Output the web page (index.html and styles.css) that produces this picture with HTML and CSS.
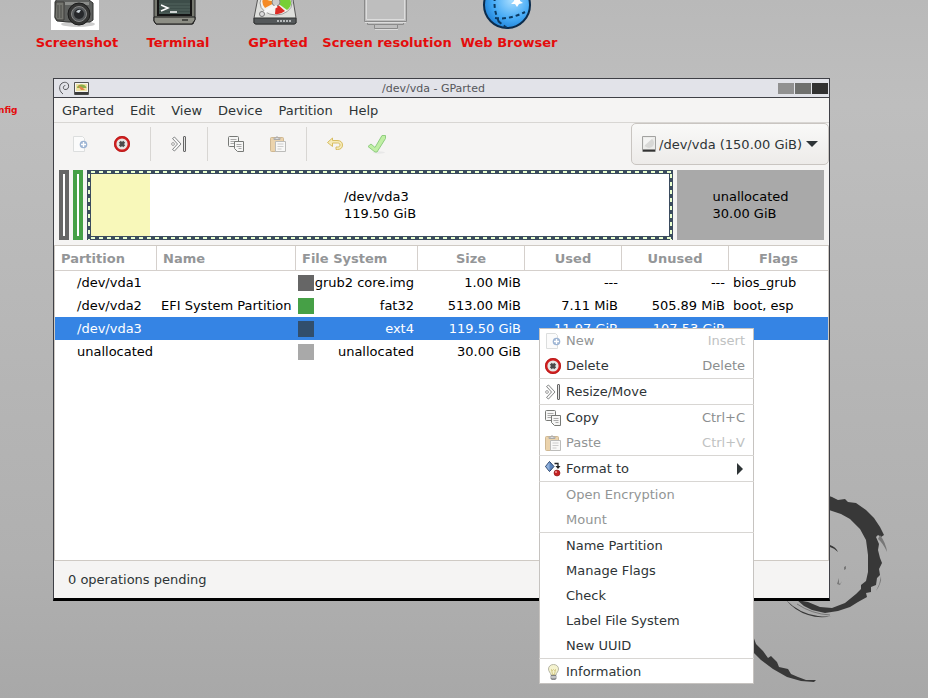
FILE: index.html
```html
<!DOCTYPE html>
<html lang="en">
<head>
<meta charset="utf-8">
<title>/dev/vda - GParted</title>
<link rel="stylesheet" href="styles.css">
</head>
<body>
<svg class="defs" width="0" height="0" aria-hidden="true">
  <symbol id="i-new" viewBox="0 0 16 16">
    <path d="M1.500 .5h9l2 2v13h-11z" fill="#fbfbfb" stroke="#dcdede"/>
    <circle cx="11.500" cy="8.500" r="3.800" fill="#9db4d3"/>
    <path d="M11.500 6v5M9 8.500h5" stroke="#fff" stroke-width="1.400"/>
  </symbol>
  <symbol id="i-delete" viewBox="0 0 16 16">
    <circle cx="8" cy="8" r="6.800" fill="#e6e6e4" stroke="#d21f1f" stroke-width="2.400"/>
    <circle cx="8" cy="8" r="7.600" fill="none" stroke="#b01818" stroke-width=".7"/>
    <path d="M5.800 5.800l4.400 4.400M10.200 5.800l-4.400 4.400" stroke="#4a4a4a" stroke-width="2.800"/>
  </symbol>
  <symbol id="i-resize" viewBox="0 0 16 16">
    <path d="M1.500 2.500l2-1.500L10 8l-6.500 7-2-1.500L6.500 8z" fill="#f8f8f8" stroke="#77797a" stroke-width=".9"/>
    <circle cx="2" cy="8" r="1.400" fill="#fff" stroke="#888" stroke-width=".8"/>
    <rect x="12.500" y=".5" width="2" height="15" rx=".5" fill="#e4e4e4" stroke="#666"/>
  </symbol>
  <symbol id="i-copy" viewBox="0 0 16 16">
    <rect x=".5" y=".5" width="10" height="10" rx="1" fill="#f6f6f5" stroke="#777976"/>
    <path d="M2.500 3.500h6M2.500 5.500h6M2.500 7.500h4" stroke="#aaa"/>
    <path d="M6.500 5.500h9v10h-6l-3-3z" fill="#f6f6f5" stroke="#777976"/>
    <path d="M8.500 8.500h5M8.500 10.500h5M10.500 12.500h3" stroke="#aaa"/>
  </symbol>
  <symbol id="i-paste" viewBox="0 0 16 16">
    <rect x=".5" y="1.500" width="13" height="14" rx="1" fill="#ebd3ac" stroke="#cfb893"/>
    <path d="M4 3.500V2h2l1-1.500L8 2h2v1.500z" fill="#ddd" stroke="#aaa"/>
    <path d="M5.500 5.500h10v10h-10z" fill="#f8f8f7" stroke="#bcbcba"/>
    <path d="M7.500 8h6M7.500 10.500h6M7.500 13h4" stroke="#ccc"/>
  </symbol>
  <symbol id="i-undo" viewBox="0 0 16 16">
    <path d="M.5 6.500l5-4.500v2.500h4.500c3.500 0 5.500 1.500 5.500 4.500 0 3-2 4.500-5 4.500H9v-2.500h1.500c1.500 0 2.500-.5 2.500-2s-1-2-2.500-2h-5v3.500z" fill="#f6ebb9" stroke="#d8bd62"/>
  </symbol>
  <symbol id="i-apply" viewBox="0 0 20 20">
    <ellipse cx="12" cy="18.500" rx="6" ry="1.200" fill="#e8e8e8"/>
    <path d="M1 12.500L4 10l4 3.500L15 1.500h3.500v3L10 18H8z" fill="#c0efa4" stroke="#8fcd80" stroke-linejoin="round"/>
  </symbol>
  <symbol id="i-format" viewBox="0 0 16 16">
    <path d="M4.500 .5L9 5.500l-4.500 5L.5 5.500z" fill="#5a84bd" stroke="#263f66"/>
    <path d="M4.500 1v9L1 5.500z" fill="#8fb0dc"/>
    <path d="M9.500 2.500h3.500v4" fill="none" stroke="#222" stroke-width="1.300"/>
    <path d="M10.500 5h5L13 8z" fill="#222"/>
    <circle cx="12" cy="12" r="3" fill="#c62121" stroke="#841414" stroke-width=".6"/>
    <circle cx="11" cy="11" r="1" fill="#f09a9a"/>
  </symbol>
  <symbol id="i-info" viewBox="0 0 16 16">
    <path d="M8.500 .5c-3 0-5 2-5 4.500 0 2.500 2 3.500 2.500 6h5c.5-2.500 2.500-3.500 2.500-6 0-2.500-2-4.500-5-4.500z" fill="#f5f3cf" stroke="#b6b6a5"/>
    <path d="M6.500 5.500l1 1 1-1 1 1 1-1-1 5h-2z" fill="none" stroke="#c9bd74" stroke-width=".8"/>
    <path d="M6 11.500h5v3l-1 1.300H7l-1-1.300z" fill="#9b9da0" stroke="#686a6d" stroke-width=".7"/>
    <path d="M6 13h5" stroke="#eee"/>
  </symbol>
  <symbol id="i-app" viewBox="0 0 15 13">
    <path d="M.5 .5h14v12H.5z" fill="#f4f4ee" stroke="#555"/>
    <path d="M2 2h11v7H2z" fill="#f0e2a4"/>
    <path d="M3 6c0-4 8-5 9.500 0L8 6z" fill="#8aae4a"/>
    <path d="M4 3.500l4 1.500 3 3H7z" fill="#e0854a"/>
    <path d="M1 10h13v2.500H1z" fill="#3a3a3a"/>
  </symbol>
</svg>

<main class="desktop">
  <svg class="swirl" viewBox="740 480 188 218" aria-hidden="true">
    <path d="M826 495L832 497 838 500 845 499 848 502 856 503 866 510 874 518 880 527 884 535 881 537 878 535 876 537 879 544 878 550 880 558 882 563 879 569 880 575 877 578 876 585 871 587 871 592 866 593 867 597 858 602 850 607 838 611 825 613 812 610 804 606 797 600 808 602 820 607 832 608 845 603 856 594 861 589 861 585 866 581 868 572 868 555 866 540 860 529 850 519 841 514 826 509z"/>
    <path d="M880 535Q886 543 887 552 883 543 878 539zM881 576Q882 583 876 591 880 584 881 576z" fill="#777"/>
    <path d="M786 600Q800 614 818 616 826 617 832 616 820 619 808 615 795 611 786 600z"/>
    <path d="M797 604Q812 614 830 615" fill="none" stroke="#777"/>
    <path d="M830 545Q836 547 838 552 834 548 830 547z"/>
    <path d="M844 567l2-1v3l-2 1zM839 578l-2 6 3 1 2-4-2 3-1-1z" fill="#777"/>
    <path d="M752 633L756 644 763 651 768 658 771 656 777 662 779 667 788 669 791 674 798 677 806 680 816 680 814 682 801 681 787 677 773 669 761 660 752 651z"/>
  </svg>

  <a class="launcher" id="l-shot" href="#l-shot">
    <svg viewBox="0 0 48 48" aria-hidden="true">
      <rect width="48" height="48" fill="#fff"/>
      <ellipse cx="27" cy="42" rx="17" ry="3" fill="#ccc"/>
      <path d="M6 17l10-6h16l6 7 4 3v17l-3 2H18l-12-1-2-3V20z" fill="#5e605e" stroke="#2f302f"/>
      <path d="M5 20h8v18H6l-2-3z" fill="#74756f" stroke="#3c3d3a"/>
      <path d="M14 20h24v3H14z" fill="#8b8d8a"/>
      <path d="M7 23v13M10 23v13" stroke="#4b4c48"/>
      <circle cx="28" cy="32" r="11" fill="#343534" stroke="#1b1b1b"/>
      <circle cx="28" cy="32" r="7.500" fill="#55595b" stroke="#888"/>
      <circle cx="28" cy="32" r="5" fill="#26282b"/>
      <path d="M25 30q2-3 5-2l-2 3z" fill="#c9d2d8"/>
    </svg>
    <span>Screenshot</span>
  </a>
  <a class="launcher" id="l-term" href="#l-term">
    <svg viewBox="0 0 48 48" aria-hidden="true">
      <path d="M2 2h41v35l-2 5H4l-2-3z" fill="#777970" stroke="#222"/>
      <path d="M2 35h41v3l-3 4H4l-2-3z" fill="#8d8e85" stroke="#191919"/>
      <path d="M6 4h33v29H6z" fill="#3d4d49" stroke="#151515" stroke-width="2"/>
      <path d="M7 22h31M7 25h31M7 28h31M7 31h31" stroke="#53645f"/>
      <path d="M9 23l7 3-7 3M18 30h7" fill="none" stroke="#fff" stroke-width="1.500"/>
      <path d="M30 38h6" stroke="#494a45" stroke-width="2"/>
    </svg>
    <span>Terminal</span>
  </a>
  <a class="launcher" id="l-part" href="#l-part">
    <svg viewBox="0 0 48 48" aria-hidden="true">
      <path d="M8 5h31l5 31v5l-1 1H3l-1-1v-5z" fill="#dedfdc" stroke="#555"/>
      <path d="M2 36h42v5l-2 1H4l-2-1z" fill="#54585a" stroke="#303233"/>
      <ellipse cx="24" cy="21" rx="16" ry="12" fill="#f2f2ef" stroke="#999"/>
      <path d="M24 20V9q14 1 15 12 0 4-4 7z" fill="#76cf36"/>
      <path d="M24 21l9 8q-5 4-10 3z" fill="#dd2c25"/>
      <path d="M24 20l-11 6q-4-5-2-9z" fill="#f58a25"/>
      <path d="M24 20l-12-3q3-6 12-8z" fill="#f3e9a4"/>
      <circle cx="24" cy="20" r="4" fill="#ccc" stroke="#888"/>
      <path d="M10 32l6-4 9-4" stroke="#f8f8f8" stroke-width="3"/>
      <circle cx="10" cy="32" r="2.500" fill="#ddd" stroke="#777"/>
      <path d="M25 39h15" stroke="#b5b9ba" stroke-width="2" stroke-dasharray="2 1"/>
    </svg>
    <span>GParted</span>
  </a>
  <a class="launcher" id="l-res" href="#l-res">
    <svg viewBox="0 0 48 48" aria-hidden="true">
      <g fill="#bebebe" stroke="#8a8a8a">
        <path d="M3.500 2.500h42v37h-42z"/>
        <path d="M5.500 4.500h38v33h-38z" stroke="#dcdcdc"/>
        <path d="M6.500 39.500h36v3h-36z"/>
        <path d="M13.500 42.500h23v4h-23z"/>
      </g>
      <path d="M4 40.500h41M14 47.500h23" stroke="#dcdcdc"/>
    </svg>
    <span>Screen resolution</span>
  </a>
  <a class="launcher" id="l-web" href="#l-web">
    <svg viewBox="0 0 48 48" aria-hidden="true">
      <defs>
        <radialGradient id="globe" cx=".6" cy=".4" r=".7"><stop offset="0" stop-color="#a5dcff"/><stop offset=".6" stop-color="#43a9f5"/><stop offset="1" stop-color="#1778cf"/></radialGradient>
      </defs>
      <circle cx="24" cy="23" r="23" fill="url(#globe)" stroke="#0c2c4c" stroke-width="2"/>
      <path d="M12 15q-2 12 4 25M12 36q14 2 30-6M15 39q5 4 9 7" fill="none" stroke="#0b3a62" stroke-width="2" stroke-dasharray="4 3"/>
      <path d="M32 14l2 3 3-2v4l3 2-4 1-2 3-2-3-4 0 3-3z" fill="#fff"/>
    </svg>
    <span>Web Browser</span>
  </a>
  <a class="clipped" href="#config">nfig</a>

  <section class="window">
    <header class="titlebar">
      <svg class="debian" viewBox="0 0 12 14" aria-hidden="true"><path d="M7 8.500C4.800 8.500 4.800 4.500 7.300 4.500M7 8.500c3 .3 4-2 3.500-4.500C10 1 5.500 .3 3 3 .5 6 1.500 10.500 5 13" fill="none" stroke="#55565a"/></svg>
      <svg class="app" aria-hidden="true"><use href="#i-app"/></svg>
      <h1>/dev/vda - GParted</h1>
      <div class="controls">
        <button class="min" aria-label="Minimize"></button>
        <button class="max" aria-label="Maximize"></button>
        <button class="close" aria-label="Close"></button>
      </div>
    </header>

    <nav class="menubar">
      <button>GParted</button><button>Edit</button><button>View</button><button>Device</button><button>Partition</button><button>Help</button>
    </nav>

    <div class="toolbar">
      <button aria-label="New"><svg><use href="#i-new"/></svg></button>
      <button aria-label="Delete"><svg><use href="#i-delete"/></svg></button>
      <i class="sep"></i>
      <button aria-label="Resize/Move"><svg><use href="#i-resize"/></svg></button>
      <i class="sep"></i>
      <button aria-label="Copy"><svg><use href="#i-copy"/></svg></button>
      <button aria-label="Paste"><svg><use href="#i-paste"/></svg></button>
      <i class="sep"></i>
      <button aria-label="Undo"><svg><use href="#i-undo"/></svg></button>
      <button aria-label="Apply"><svg class="large"><use href="#i-apply"/></svg></button>
      <label class="device">
        <svg class="disk" viewBox="0 0 14 16" aria-hidden="true">
          <path d="M.5 .5h13v15H.5z" fill="#ececea" stroke="#a2a2a0"/>
          <circle cx="7" cy="7" r="5" fill="#d8d8d6"/>
          <path d="M2 2h9L2 10z" fill="#f4f4f3"/>
          <path d="M1 14.500h12" stroke="#333" stroke-width="2"/>
        </svg>
        <select aria-label="Device"><option>/dev/vda (150.00 GiB)</option></select>
        <svg class="arrow" viewBox="0 0 12 6" aria-hidden="true"><path d="M0 0h12L6 6z" fill="#2e3436"/></svg>
      </label>
    </div>

    <div class="diskmap">
      <div class="slim grub"></div>
      <div class="slim fat"></div>
      <div class="part selected"><div class="used"></div><p>/dev/vda3<br>119.50 GiB</p></div>
      <div class="part free"><p>unallocated<br>30.00 GiB</p></div>
    </div>

    <div class="list">
      <table>
        <colgroup><col class="c1"><col class="c2"><col class="c3"><col class="c4"><col class="c5"><col class="c6"><col></colgroup>
        <thead>
          <tr><th class="left">Partition</th><th class="left">Name</th><th class="left">File System</th><th>Size</th><th>Used</th><th>Unused</th><th>Flags</th></tr>
        </thead>
        <tbody>
          <tr><td class="dev">/dev/vda1</td><td></td><td class="fs"><div><i class="sw grub"></i>grub2 core.img</div></td><td class="num">1.00 MiB</td><td class="num">---</td><td class="num">---</td><td>bios_grub</td></tr>
          <tr><td class="dev">/dev/vda2</td><td>EFI System Partition</td><td class="fs"><div><i class="sw fat"></i>fat32</div></td><td class="num">513.00 MiB</td><td class="num">7.11 MiB</td><td class="num">505.89 MiB</td><td>boot, esp</td></tr>
          <tr class="active"><td class="dev">/dev/vda3</td><td></td><td class="fs"><div><i class="sw ext"></i>ext4</div></td><td class="num">119.50 GiB</td><td class="num">11.97 GiB</td><td class="num">107.53 GiB</td><td></td></tr>
          <tr><td class="dev">unallocated</td><td></td><td class="fs"><div><i class="sw free"></i>unallocated</div></td><td class="num">30.00 GiB</td><td></td><td></td><td></td></tr>
        </tbody>
      </table>
    </div>

    <footer class="status">0 operations pending</footer>

    <div class="context" role="menu">
      <button disabled><svg><use href="#i-new"/></svg>New<kbd>Insert</kbd></button>
      <button><svg><use href="#i-delete"/></svg>Delete<kbd>Delete</kbd></button>
      <hr>
      <button><svg><use href="#i-resize"/></svg>Resize/Move</button>
      <hr>
      <button><svg><use href="#i-copy"/></svg>Copy<kbd>Ctrl+C</kbd></button>
      <button disabled><svg><use href="#i-paste"/></svg>Paste<kbd>Ctrl+V</kbd></button>
      <hr>
      <button><svg><use href="#i-format"/></svg>Format to<svg class="more" viewBox="0 0 8 14"><path d="M0 1l6 6-6 6z" fill="#2e3436"/></svg></button>
      <hr>
      <button class="plain" disabled>Open Encryption</button>
      <button class="plain" disabled>Mount</button>
      <hr>
      <button class="plain">Name Partition</button>
      <button class="plain">Manage Flags</button>
      <button class="plain">Check</button>
      <button class="plain">Label File System</button>
      <button class="plain">New UUID</button>
      <hr>
      <button><svg><use href="#i-info"/></svg>Information</button>
    </div>
  </section>
</main>
</body>
</html>
```
FILE: styles.css
```css
* { box-sizing: border-box; }

body {
  margin: 0;
  font: 13px/17px "DejaVu Sans", sans-serif;
  color: #2e3436;
}

button, select {
  font: inherit;
  color: inherit;
  margin: 0;
  padding: 0;
  border: 0;
  background: none;
}

p { margin: 0; }
svg { display: block; flex: none; }
.defs { position: absolute; }

.desktop {
  position: relative;
  min-height: 100vh;
  padding: 78px 98px 97px 53px;
  overflow: hidden;
  background: linear-gradient(#b9b9b9 0, #bebebe 15%, #b4b4b4 60%, #b0b0b0 80%, #a8a8a8 100%);
}

.swirl {
  position: absolute;
  left: 740px;
  top: 480px;
  width: 188px;
  height: 218px;
  fill: #383838;
}

/* Desktop launchers */
.launcher {
  position: absolute;
  top: -18px;
  display: flex;
  flex-direction: column;
  align-items: center;
  gap: 4px;
  width: 160px;
  color: #e40c0c;
  font-weight: bold;
  text-decoration: none;
  white-space: nowrap;
}
.launcher svg {
  width: 48px;
  height: 48px;
  margin-right: 4px;
}
#l-shot { left: -3px; }
#l-term { left: 98px; }
#l-part { left: 198px; }
#l-res { left: 307px; }
#l-web { left: 429px; }

.clipped {
  position: absolute;
  left: -2px;
  top: 102px;
  color: #e40c0c;
  font-size: 9px;
  font-weight: bold;
  text-decoration: none;
}

/* Window frame */
.window {
  position: relative;
  border: 1px solid #3f4046;
  border-bottom: 3px solid #000;
  background: #f5f4f3;
}

.titlebar {
  display: flex;
  align-items: center;
  gap: 4px;
  height: 19px;
  padding: 0 1px 0 4px;
  border-bottom: 1px solid #3f4046;
  background: #e2e3e9;
}
.titlebar h1 {
  flex: 1;
  margin: 0;
  font-size: 11px;
  font-weight: normal;
  color: #55565a;
  text-align: center;
}
.debian { width: 12px; height: 14px; }
.app { width: 15px; height: 13px; }
.controls { display: flex; gap: 1px; }
.controls button { width: 16px; height: 11px; }
.min { background: #919191; }
.max { background: #6f706e; }
.close { background: #313131; }

.menubar {
  display: flex;
  height: 25px;
  border-bottom: 1px solid #d8d6d3;
}
.menubar button { padding: 0 8px; }

.toolbar {
  display: flex;
  height: 47px;
  padding: 0 0 5px 5px;
}
.toolbar button {
  display: flex;
  align-items: center;
  justify-content: center;
  width: 42px;
}
.toolbar svg { width: 16px; height: 16px; }
.toolbar .large { width: 20px; height: 20px; }
.sep {
  width: 1px;
  margin: 4px 7px;
  background: #d8d6d3;
}

.toolbar .device {
  display: flex;
  align-items: center;
  gap: 3px;
  margin-left: auto;
  padding: 0 10px;
  border: 1px solid #c9c5c1;
  border-radius: 5px;
  background: linear-gradient(#f9f9f8, #edebe9);
}
.toolbar .disk { width: 14px; height: 16px; }
.toolbar .arrow { width: 12px; height: 6px; }
.device select { appearance: none; }

/* Disk map */
.diskmap {
  display: flex;
  gap: 4px;
  height: 75px;
  padding: 0 5px 5px;
  color: #000;
}
.slim {
  width: 10px;
  border: 4px solid;
  background: #fff;
}
.slim.grub { border-color: #666; }
.slim.fat { border-color: #46a046; }
.part {
  position: relative;
  display: flex;
  align-items: center;
  justify-content: center;
  padding: 4px;
}
.part.selected {
  flex: 578;
  background:
    linear-gradient(#fff, #fff) content-box no-repeat,
    repeating-linear-gradient(90deg, #3b4c5e 0 4px, #e9ffcf 4px 8px) 0 1px / 100% 2px no-repeat,
    repeating-linear-gradient(90deg, #3b4c5e 0 4px, #e9ffcf 4px 8px) 0 67px / 100% 2px no-repeat,
    repeating-linear-gradient(#3b4c5e 0 4px, #e9ffcf 4px 8px) 1px 0 / 2px 100% no-repeat,
    repeating-linear-gradient(#3b4c5e 0 4px, #e9ffcf 4px 8px) right 1px top 0 / 2px 100% no-repeat,
    #3b4c5e;
}
.part.free { flex: 139; background: #a9a9a9; }
.part p { position: relative; }
.used {
  position: absolute;
  inset: 4px auto 4px 4px;
  width: 10%;
  background: #f8f8ba;
}

/* Partition list */
.list {
  min-height: 316px;
  border: 1px solid #cfcac4;
  background: #fff;
  color: #000;
}
table {
  width: 100%;
  table-layout: fixed;
  border-spacing: 0;
}
.c1 { width: 102px; }
.c2 { width: 139px; }
.c3 { width: 122px; }
.c4, .c6 { width: 107px; }
.c5 { width: 97px; }
th {
  height: 25px;
  padding: 0 6px;
  border-right: 1px solid #d5d0cc;
  border-bottom: 1px solid #d5d0cc;
  color: #949698;
}
th:last-child { border-right: 0; }
.left { text-align: left; }
td {
  height: 23px;
  padding: 0 4px;
  white-space: nowrap;
}
.dev { padding-left: 22px; }
.num { text-align: right; }
.fs { padding-left: 2px; }
.fs div {
  display: flex;
  align-items: center;
  justify-content: space-between;
}
.sw { width: 16px; height: 16px; }
.sw.grub { background: #666; }
.sw.fat { background: #46a046; }
.sw.ext { background: #314e6c; }
.sw.free { background: #a9a9a9; }
.active { background: #3584e4; color: #fff; }

.status { padding: 10px 14px; }

/* Context menu */
.context {
  position: absolute;
  left: 485px;
  top: 249px;
  width: 215px;
  background: #fff;
  box-shadow: inset 0 0 0 1px #c6c3c0;
}
.context button {
  display: flex;
  align-items: center;
  gap: 5px;
  width: 100%;
  height: 25px;
  padding: 0 9px 0 6px;
}
.context .plain { padding-left: 27px; }
.context button:disabled { color: #929595; }
.context svg { width: 16px; height: 16px; }
.context .more { width: 8px; height: 14px; margin-left: auto; }
.context hr {
  height: 1px;
  margin: 0;
  border: 0;
  background: #d8d6d3;
}
kbd {
  margin-left: auto;
  font: inherit;
  color: #8b8e8f;
}
:disabled kbd { color: #c0c2c2; }
```
